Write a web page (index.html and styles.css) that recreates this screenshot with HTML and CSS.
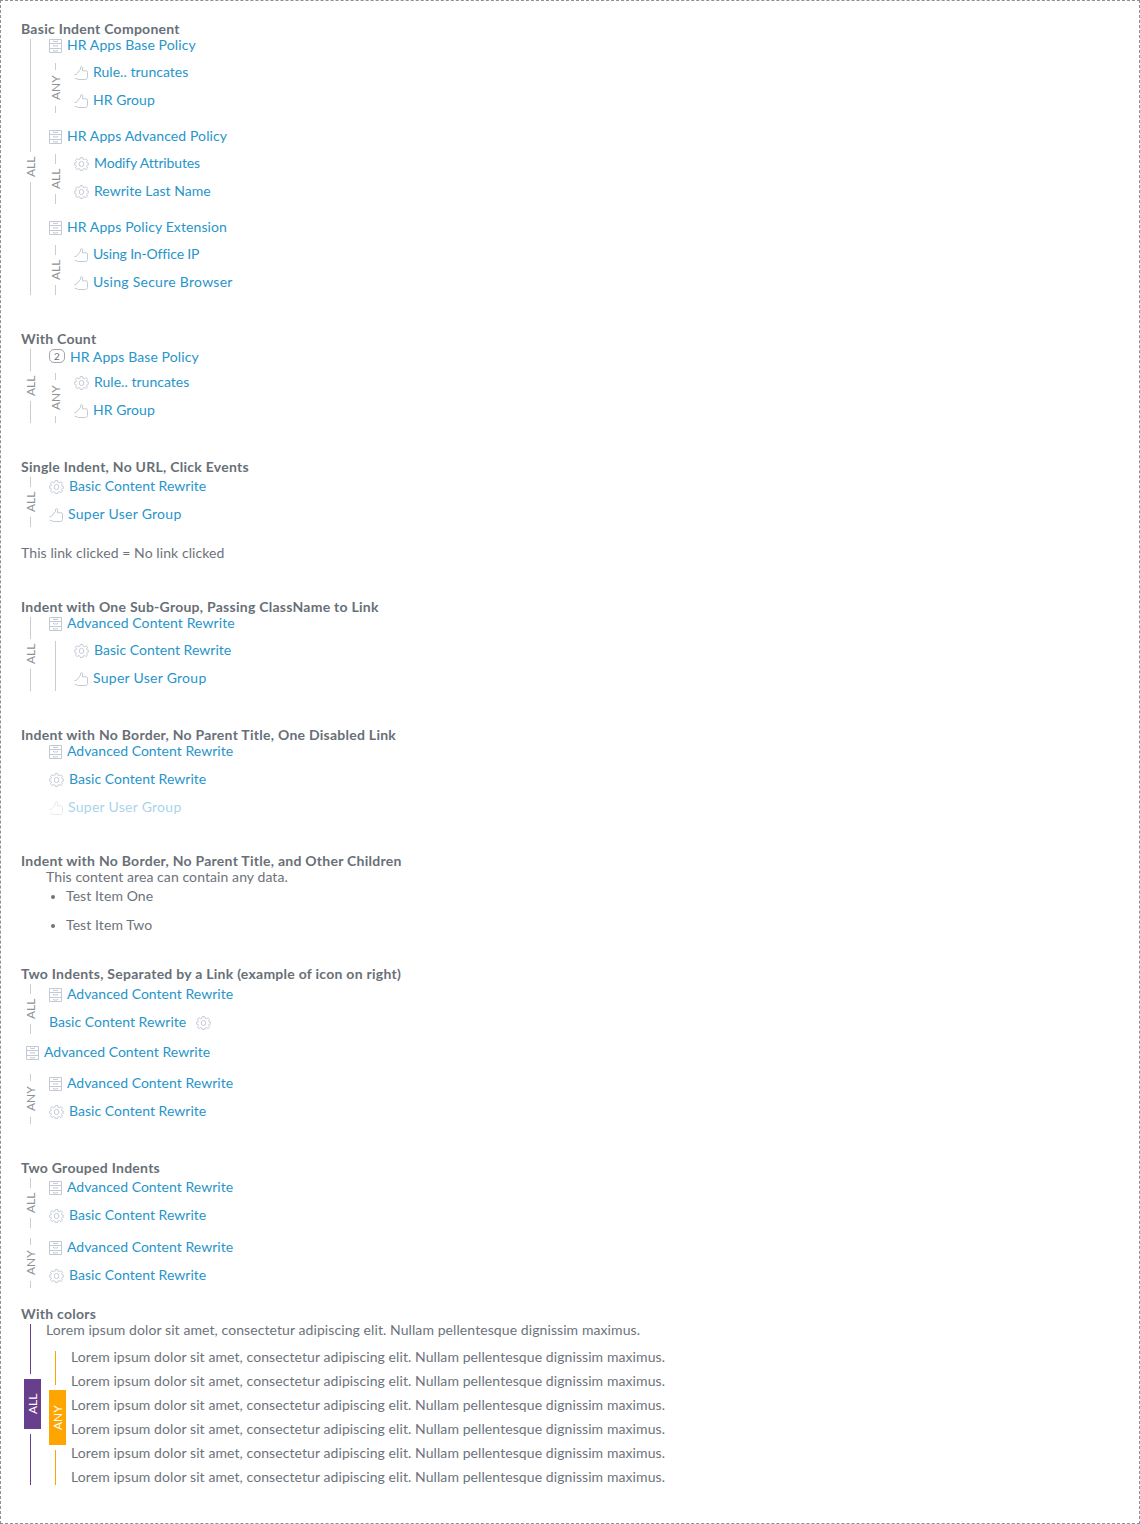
FILE: index.html
```html
<!DOCTYPE html>
<html lang="en">
<head>
<meta charset="utf-8">
<title>Indent</title>
<link rel="stylesheet" href="styles.css">
</head>
<body>
<svg class="sprite" aria-hidden="true">
  <symbol id="cabinet" viewBox="0 0 13 14"><path d="M.5.5h12v13H.5zM.5 4.5h12M.5 9.5h12M4.5 1.5v1h4v-1M4.5 6v1h4V6M4.5 11v1h4v-1"/></symbol>
  <symbol id="gear" viewBox="0 0 15 15" preserveAspectRatio="none"><path d="M6.3.6h2.4l.4 1.8 1.3.5 1.6-1 1.6 1.6-1 1.6.5 1.3 1.8.4v1.6l-1.8.5-.5 1.3 1 1.6-1.6 1.6-1.6-1-1.3.5-.4 1.5H6.3l-.4-1.5-1.3-.5-1.6 1-1.6-1.6 1-1.6-.5-1.3L.1 8.4V6.8l1.8-.4.5-1.3-1-1.6L3 1.9l1.6 1 1.3-.5z"/><ellipse cx="7.5" cy="7.5" rx="2.3" ry="2.8"/></symbol>
  <symbol id="thumb" viewBox="0 0 14 14"><path d="M.4 8.5h1.8L6.5 3.2V1.3Q8.6-.1 8.8 1.6L8.3 4.8h3.9q1.4.2 1.3 1.4v5.2q-.1 1.8-1.8 2.1H4.2q-1-1-3.4-1"/></symbol>
</svg>
<main class="panel">
  <section class="demo demo-basic">
    <h2>Basic Indent Component</h2>
    <div class="indent">
      <div class="rail"><span class="label">ALL</span></div>
      <div class="groups">
        <div>
          <a class="link title"><svg class="icon cabinet"><use href="#cabinet"/></svg>HR Apps Base Policy</a>
          <div class="indent">
            <div class="rail"><span class="label any">ANY</span></div>
            <div class="rows"><a class="link"><svg class="icon thumb"><use href="#thumb"/></svg>Rule.. truncates</a><a class="link"><svg class="icon thumb"><use href="#thumb"/></svg>HR Group</a></div>
          </div>
        </div>
        <div>
          <a class="link title"><svg class="icon cabinet"><use href="#cabinet"/></svg>HR Apps Advanced Policy</a>
          <div class="indent">
            <div class="rail"><span class="label">ALL</span></div>
            <div class="rows"><a class="link tight"><svg class="icon gear"><use href="#gear"/></svg>Modify Attributes</a><a class="link"><svg class="icon gear"><use href="#gear"/></svg>Rewrite Last Name</a></div>
          </div>
        </div>
        <div>
          <a class="link title"><svg class="icon cabinet"><use href="#cabinet"/></svg>HR Apps Policy Extension</a>
          <div class="indent">
            <div class="rail"><span class="label">ALL</span></div>
            <div class="rows"><a class="link tight"><svg class="icon thumb"><use href="#thumb"/></svg>Using In-Office IP</a><a class="link wide"><svg class="icon thumb"><use href="#thumb"/></svg>Using Secure Browser</a></div>
          </div>
        </div>
      </div>
    </div>
  </section>

  <section class="demo">
    <h2>With Count</h2>
    <div class="indent">
      <div class="rail"><span class="label">ALL</span></div>
      <div>
        <a class="link title counted"><span class="count">2</span><span>HR Apps Base Policy</span></a>
        <div class="indent">
          <div class="rail"><span class="label any">ANY</span></div>
          <div class="rows"><a class="link"><svg class="icon gear"><use href="#gear"/></svg>Rule.. truncates</a><a class="link"><svg class="icon thumb"><use href="#thumb"/></svg>HR Group</a></div>
        </div>
      </div>
    </div>
  </section>

  <section class="demo">
    <h2>Single Indent, No URL, Click Events</h2>
    <div class="indent">
      <div class="rail"><span class="label">ALL</span></div>
      <div class="rows"><a class="link"><svg class="icon gear"><use href="#gear"/></svg>Basic Content Rewrite</a><a class="link wide"><svg class="icon thumb"><use href="#thumb"/></svg>Super User Group</a></div>
    </div>
    <p class="status">This link clicked = No link clicked</p>
  </section>

  <section class="demo">
    <h2>Indent with One Sub-Group, Passing ClassName to Link</h2>
    <div class="indent">
      <div class="rail"><span class="label">ALL</span></div>
      <div>
        <a class="link title"><svg class="icon cabinet"><use href="#cabinet"/></svg>Advanced Content Rewrite</a>
        <div class="indent">
          <div class="rail"></div>
          <div class="rows"><a class="link"><svg class="icon gear"><use href="#gear"/></svg>Basic Content Rewrite</a><a class="link wide"><svg class="icon thumb"><use href="#thumb"/></svg>Super User Group</a></div>
        </div>
      </div>
    </div>
  </section>

  <section class="demo">
    <h2>Indent with No Border, No Parent Title, One Disabled Link</h2>
    <div class="plain rows compact"><a class="link"><svg class="icon cabinet"><use href="#cabinet"/></svg>Advanced Content Rewrite</a><a class="link"><svg class="icon gear"><use href="#gear"/></svg>Basic Content Rewrite</a><a class="link wide disabled"><svg class="icon thumb"><use href="#thumb"/></svg>Super User Group</a></div>
  </section>

  <section class="demo demo-children">
    <h2>Indent with No Border, No Parent Title, and Other Children</h2>
    <div class="plain">
      <p class="line">This content area can contain any data.</p>
      <ul><li>Test Item One</li><li>Test Item Two</li></ul>
    </div>
  </section>

  <section class="demo">
    <h2>Two Indents, Separated by a Link (example of icon on right)</h2>
    <div class="indent">
      <div class="rail"><span class="label">ALL</span></div>
      <div class="rows lowered"><a class="link"><svg class="icon cabinet"><use href="#cabinet"/></svg>Advanced Content Rewrite</a><a class="link icon-right">Basic Content Rewrite<svg class="icon gear"><use href="#gear"/></svg></a></div>
    </div>
    <a class="link separator"><svg class="icon cabinet"><use href="#cabinet"/></svg>Advanced Content Rewrite</a>
    <div class="indent">
      <div class="rail"><span class="label any">ANY</span></div>
      <div class="rows"><a class="link"><svg class="icon cabinet"><use href="#cabinet"/></svg>Advanced Content Rewrite</a><a class="link"><svg class="icon gear"><use href="#gear"/></svg>Basic Content Rewrite</a></div>
    </div>
  </section>

  <section class="demo demo-grouped">
    <h2>Two Grouped Indents</h2>
    <div class="indent">
      <div class="rail"><span class="label">ALL</span></div>
      <div class="rows"><a class="link"><svg class="icon cabinet"><use href="#cabinet"/></svg>Advanced Content Rewrite</a><a class="link"><svg class="icon gear"><use href="#gear"/></svg>Basic Content Rewrite</a></div>
    </div>
    <div class="indent">
      <div class="rail"><span class="label any">ANY</span></div>
      <div class="rows"><a class="link"><svg class="icon cabinet"><use href="#cabinet"/></svg>Advanced Content Rewrite</a><a class="link"><svg class="icon gear"><use href="#gear"/></svg>Basic Content Rewrite</a></div>
    </div>
  </section>

  <section class="demo">
    <h2>With colors</h2>
    <div class="indent">
      <div class="rail purple"><span class="label">ALL</span></div>
      <div>
        <p class="line intro">Lorem ipsum dolor sit amet, consectetur adipiscing elit. Nullam pellentesque dignissim maximus.</p>
        <div class="indent">
          <div class="rail orange"><span class="label any">ANY</span></div>
          <div class="copy">
            <p class="line">Lorem ipsum dolor sit amet, consectetur adipiscing elit. Nullam pellentesque dignissim maximus.</p>
            <p class="line">Lorem ipsum dolor sit amet, consectetur adipiscing elit. Nullam pellentesque dignissim maximus.</p>
            <p class="line">Lorem ipsum dolor sit amet, consectetur adipiscing elit. Nullam pellentesque dignissim maximus.</p>
            <p class="line">Lorem ipsum dolor sit amet, consectetur adipiscing elit. Nullam pellentesque dignissim maximus.</p>
            <p class="line">Lorem ipsum dolor sit amet, consectetur adipiscing elit. Nullam pellentesque dignissim maximus.</p>
            <p class="line">Lorem ipsum dolor sit amet, consectetur adipiscing elit. Nullam pellentesque dignissim maximus.</p>
          </div>
        </div>
      </div>
    </div>
  </section>
</main>
</body>
</html>
```
FILE: styles.css
```css
* { box-sizing: border-box; }
body {
  margin: 0;
  background: #fff;
  color: #6d737b;
  font: 14px/20px Lato, "Open Sans", sans-serif;
  letter-spacing: 0.085px;
}
h2, p, ul { margin: 0; padding: 0; }
.sprite { display: block; width: 0; height: 0; }
.panel {
  height: 1524px;
  padding: 18px 20px;
  border: 1px dashed #8c9097;
}
.demo { margin-bottom: 34px; }
h2 {
  height: 20px;
  color: #686f77;
  font-size: 14px;
  line-height: 20px;
  font-weight: 700;
  letter-spacing: 0.26px;
  white-space: nowrap;
}

.indent { display: grid; grid-template-columns: 25px 1fr; }
.rail {
  --rule: #ccc;
  display: flex;
  flex-direction: column;
  align-items: center;
  gap: 5px;
  width: 17px;
  margin-left: 3px;
}
.rail::before, .rail::after {
  content: "";
  flex: 1;
  width: 1px;
  margin-right: 4px;
  background: var(--rule);
}
.rail:empty { gap: 0; }
.label {
  width: 15px;
  height: 20px;
  margin-right: 4px;
  color: #8e9196;
  font-size: 12px;
  line-height: 15px;
  letter-spacing: 0;
  text-align: center;
  writing-mode: vertical-rl;
  transform: rotate(180deg);
}
.label.any { height: 26px; }
.purple { --rule: #673f8c; }
.orange { --rule: #ffa500; }
.purple::after, .orange::after { flex-basis: 1px; }
.purple .label, .orange .label {
  width: 17px;
  height: 50px;
  margin-right: 0;
  background: var(--rule);
  color: #fff;
  line-height: 17px;
}
.orange .label { height: 55px; }

.groups { display: flex; flex-direction: column; gap: 17px; }
.rows { display: flex; flex-direction: column; gap: 9px; height: 50px; }
.link {
  display: flex;
  align-items: center;
  gap: 5px;
  height: 19px;
  margin-left: 3px;
  padding-bottom: 1px;
  color: #2795ca;
  letter-spacing: 0.03px;
  white-space: nowrap;
}
.title { height: 13px; margin-bottom: 11px; letter-spacing: 0.1px; }
.wide { letter-spacing: 0.27px; }
.tight { letter-spacing: -0.15px; }
.counted { height: 16px; margin-bottom: 8px; align-items: flex-start; line-height: 16px; }
.count {
  width: 16px;
  height: 14px;
  border: 1px solid #a2a5aa;
  border-radius: 5px;
  color: #686f77;
  font-size: 10px;
  line-height: 12px;
  letter-spacing: 0;
  text-align: center;
}
.icon {
  flex: none;
  height: 14px;
  margin-top: 2px;
  fill: none;
  stroke: #c3cad5;
  stroke-width: 1;
}
.cabinet { width: 13px; }
.gear { width: 15px; }
.thumb { width: 14px; }
.icon-right { gap: 10px; }
.disabled { opacity: 0.4; }
.lowered { padding-top: 1px; }
.separator { height: 19px; margin: 9px 0 12px 5px; }
.status { margin-top: 16px; line-height: 20px; }

.plain { padding-left: 25px; }
.compact { gap: 15px; height: 72px; }
.compact .link { height: 13px; }
.line { height: 14px; line-height: 12px; white-space: nowrap; }
.demo-children { margin-bottom: 29px; }
ul { display: flex; flex-direction: column; gap: 9px; padding: 1px 0 0 20px; }
li { line-height: 20px; }
li::marker { font-size: 13px; }
.demo-grouped { margin-bottom: 16px; }
.demo-grouped .indent + .indent { margin-top: 10px; }
.intro { margin-bottom: 13px; }
.copy { display: flex; flex-direction: column; gap: 10px; }
```
